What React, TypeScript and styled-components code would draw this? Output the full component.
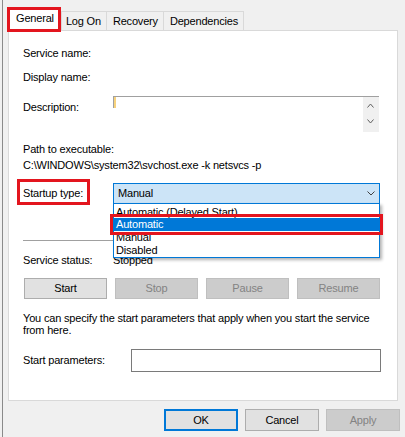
import React from "react";
import styled, { createGlobalStyle } from "styled-components";

const GlobalStyle = createGlobalStyle`
  html, body { margin: 0; padding: 0; background: #f0f0f0; }
  body {
    font-family: "Liberation Sans", Arial, sans-serif;
    font-size: 11px;
    letter-spacing: -0.18px;
    color: #000;
  }
  * { box-sizing: border-box; }
`;

const Window = styled.div`
  width: 403px;
  height: 437px;
  margin-left: 2px;
  border-left: 1px solid #8a8a8a;
  padding-top: 7px;
  display: flex;
  flex-direction: column;
  overflow: hidden;
`;

const TabStrip = styled.div`
  display: flex;
  align-items: flex-start;
  height: 23px;
  padding-left: 4px;
`;

const Tab = styled.div<{ $active?: boolean }>`
  position: relative;
  white-space: nowrap;
  line-height: 13px;
  ${(p) =>
    p.$active
      ? `
    z-index: 2;
    height: 25px;
    border: 3px solid #e3151e;
    background: #fff;
    padding: 2px 4px 4px 6px;
  `
      : `
    margin-top: 4px;
    height: 19px;
    border: 1px solid #d9d9d9;
    border-bottom: none;
    border-left-width: 0;
    background: #f0f0f0;
    padding: 3px 5px 2px 6px;
    &:nth-child(2) { border-left-width: 1px; padding-left: 4px; }
  `}
`;

const Panel = styled.div`
  margin-left: 5px;
  width: 390px;
  height: 371px;
  border: 1px solid #d9d9d9;
  background: #fff;
  padding: 0 17px 0 14px;
  display: flex;
  flex-direction: column;
`;

const Line = styled.div<{ $mt: number }>`
  margin-top: ${(p) => p.$mt}px;
  line-height: 13px;
  white-space: nowrap;
`;

const Row = styled.div<{ $mt: number }>`
  margin-top: ${(p) => p.$mt}px;
  display: flex;
  align-items: flex-start;
`;

const Label = styled.div<{ $w: number; $mt?: number }>`
  width: ${(p) => p.$w}px;
  flex: none;
  margin-top: ${(p) => p.$mt ?? 0}px;
  line-height: 13px;
  white-space: nowrap;
`;

const MarkedLabel = styled.div`
  width: 90px;
  flex: none;
  margin: -4px 0 -1px 0;
`;

const RedBox = styled.span`
  display: inline-block;
  margin-left: -6px;
  border: 3px solid #e3151e;
  padding: 5px 4px 2px 3px;
  line-height: 13px;
  white-space: nowrap;
`;

const DescBox = styled.div`
  position: relative;
  width: 266px;
  height: 36px;
  border-top: 1px solid #a0a0a0;
  display: flex;
  justify-content: flex-end;
  &::before {
    content: "";
    position: absolute;
    left: 0;
    top: -1px;
    width: 1px;
    height: 12px;
    background: #a0a0a0;
  }
`;

const Caret = styled.span`
  position: absolute;
  left: 1px;
  top: 0;
  width: 2px;
  height: 11px;
  background: #f7d27c;
`;

const ScrollBar = styled.div`
  width: 16px;
  height: 35px;
  background: #f0f0f0;
  display: flex;
  flex-direction: column;
  align-items: flex-start;
  padding: 6px 0 0 4px;
  gap: 11px;
`;

const ComboWrap = styled.div`
  position: relative;
  width: 267px;
`;

const Combo = styled.div`
  height: 21px;
  border: 1px solid #0078d7;
  background: #cce4f7;
  display: flex;
  align-items: center;
  justify-content: space-between;
  padding: 0 4px 0 4px;
  line-height: 13px;
`;

const DropList = styled.div`
  position: absolute;
  left: 0;
  top: 20px;
  width: 267px;
  height: 55px;
  border: 1px solid #0078d7;
  background: #fff;
  padding-top: 1px;
  box-shadow: 2px 2px 3px rgba(0, 0, 0, 0.3);
  z-index: 5;
`;

const Option = styled.div<{ $selected?: boolean; $clipped?: boolean }>`
  position: relative;
  height: 13px;
  line-height: 13px;
  padding-left: 2px;
  white-space: nowrap;
  overflow: ${(p) => (p.$clipped ? "hidden" : "visible")};
  background: ${(p) => (p.$selected ? "#0078d7" : "transparent")};
  color: ${(p) => (p.$selected ? "#fff" : "#000")};
  ${(p) =>
    p.$selected
      ? `z-index: 1; outline: 3px solid #e3151e; outline-offset: 1px;`
      : ""}
`;

const ClipText = styled.span`
  display: block;
  margin-top: 1px;
`;

const Separator = styled.div`
  margin-top: 36px;
  height: 1px;
  background: #a0a0a0;
`;

const ButtonGrid = styled.div`
  margin-top: 11px;
  margin-left: 1px;
  display: grid;
  grid-template-columns: repeat(4, 1fr);
  gap: 8px;
`;

const Btn = styled.div<{ $disabled?: boolean; $default?: boolean; $w?: number }>`
  height: ${(p) => (p.$w ? 22 : 21)}px;
  ${(p) => (p.$w ? `width: ${p.$w}px;` : "")}
  display: flex;
  align-items: center;
  justify-content: center;
  line-height: 13px;
  background: ${(p) => (p.$disabled ? "#cccccc" : "#e1e1e1")};
  border: ${(p) =>
    p.$default
      ? "2px solid #0078d7"
      : p.$disabled
      ? "1px solid #bfbfbf"
      : "1px solid #adadad"};
  color: ${(p) => (p.$disabled ? "#838383" : "#000")};
`;

const Para = styled.div`
  margin-top: 13px;
  line-height: 12px;
`;

const TextInput = styled.div`
  width: 250px;
  height: 23px;
  margin-right: -1px;
  border: 1px solid #7a7a7a;
  background: #fff;
`;

const Footer = styled.div`
  margin-top: 8px;
  display: flex;
  justify-content: flex-end;
  gap: 7px;
  padding-right: 5px;
`;

const Chevron = ({ up, color = "#606060", w = 7 }: { up?: boolean; color?: string; w?: number }) => (
  <svg width={w} height={5} viewBox={`0 0 ${w} 5`}>
    <polyline
      points={
        up
          ? `0.5,4.5 ${w / 2},1 ${w - 0.5},4.5`
          : `0.5,0.5 ${w / 2},4 ${w - 0.5},0.5`
      }
      fill="none"
      stroke={color}
      strokeWidth={1}
    />
  </svg>
);

export default function App() {
  return (
    <>
      <GlobalStyle />
      <Window>
        <TabStrip>
          <Tab $active>General</Tab>
          <Tab>Log On</Tab>
          <Tab>Recovery</Tab>
          <Tab>Dependencies</Tab>
        </TabStrip>
        <Panel>
          <Line $mt={16}>Service name:</Line>
          <Line $mt={11}>Display name:</Line>
          <Row $mt={12}>
            <Label $w={90} $mt={5}>
              Description:
            </Label>
            <DescBox>
              <Caret />
              <ScrollBar>
                <Chevron up />
                <Chevron />
              </ScrollBar>
            </DescBox>
          </Row>
          <Line $mt={11}>Path to executable:</Line>
          <Line $mt={3}>C:\WINDOWS\system32\svchost.exe -k netsvcs -p</Line>
          <Row $mt={11}>
            <MarkedLabel>
              <RedBox>Startup type:</RedBox>
            </MarkedLabel>
            <ComboWrap>
              <Combo>
                <span>Manual</span>
                <Chevron color="#404040" w={8} />
              </Combo>
              <DropList>
                <Option $clipped>
                  <ClipText>Automatic (Delayed Start)</ClipText>
                </Option>
                <Option $selected>Automatic</Option>
                <Option>Manual</Option>
                <Option>Disabled</Option>
              </DropList>
            </ComboWrap>
          </Row>
          <Separator />
          <Row $mt={13}>
            <Label $w={90}>Service status:</Label>
            <Label $w={100}>Stopped</Label>
          </Row>
          <ButtonGrid>
            <Btn>Start</Btn>
            <Btn $disabled>Stop</Btn>
            <Btn $disabled>Pause</Btn>
            <Btn $disabled>Resume</Btn>
          </ButtonGrid>
          <Para>
            You can specify the start parameters that apply when you start the service
            from here.
          </Para>
          <Row $mt={13}>
            <Label $w={108} $mt={5}>
              Start parameters:
            </Label>
            <TextInput />
          </Row>
        </Panel>
        <Footer>
          <Btn $default $w={74}>OK</Btn>
          <Btn $w={74}>Cancel</Btn>
          <Btn $disabled $w={74}>Apply</Btn>
        </Footer>
      </Window>
    </>
  );
}
